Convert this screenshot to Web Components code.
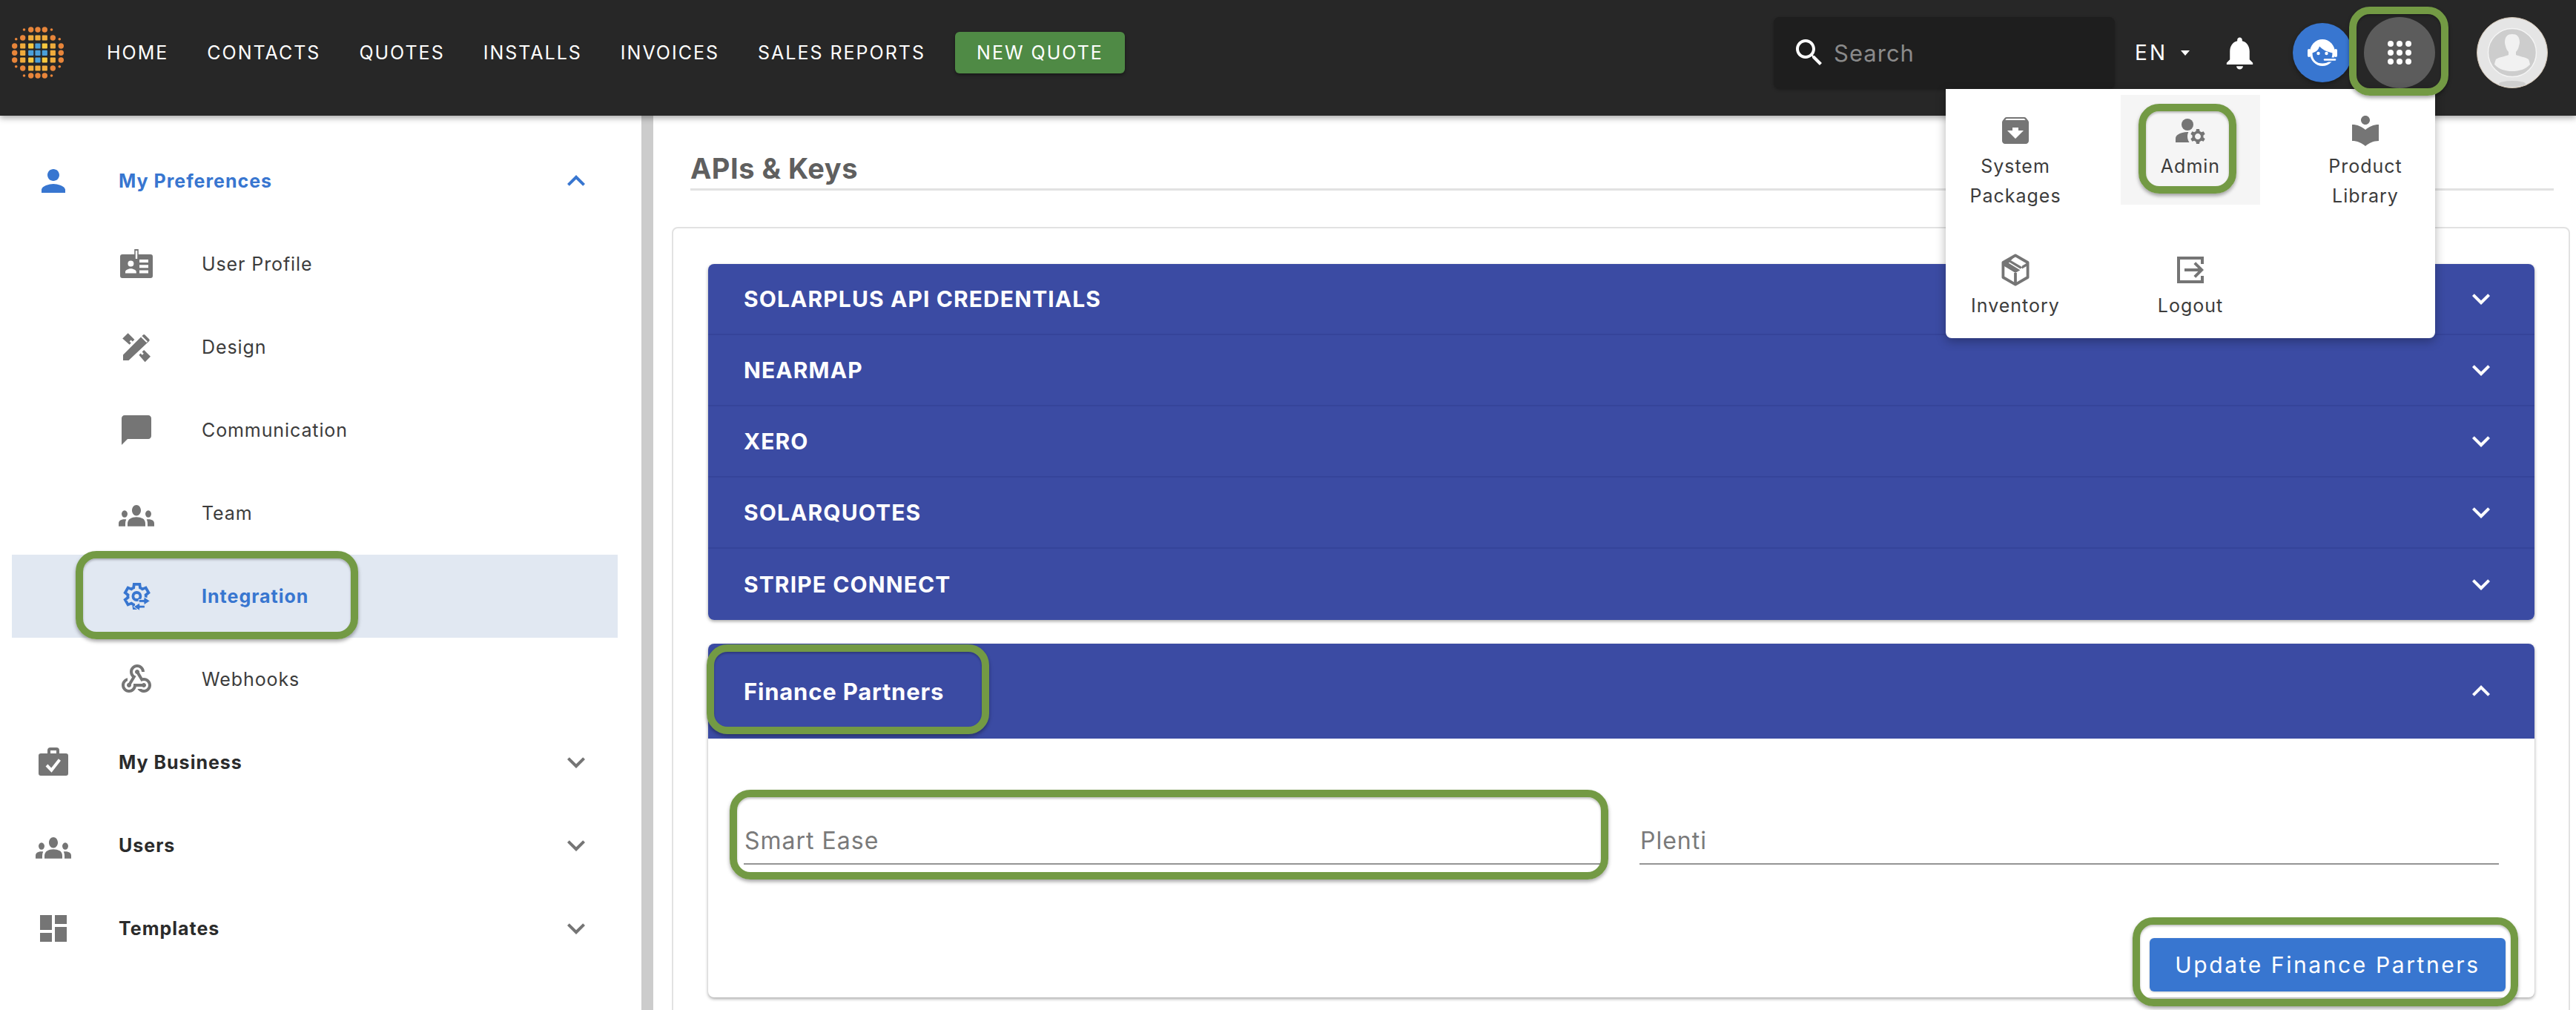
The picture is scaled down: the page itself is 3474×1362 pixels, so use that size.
<!DOCTYPE html>
<html lang="en">
<head>
<meta charset="utf-8">
<title>APIs & Keys</title>
<style>
  html, body { margin: 0; padding: 0; background: #fff; }
  body { position: relative; width: 3474px; height: 1362px; overflow: hidden; font-family: Inter, "Open Sans", sans-serif; }
</style>
</head>
<body>
<app-header>
  <nav-link>HOME</nav-link>
  <nav-link>CONTACTS</nav-link>
  <nav-link>QUOTES</nav-link>
  <nav-link>INSTALLS</nav-link>
  <nav-link>INVOICES</nav-link>
  <nav-link>SALES REPORTS</nav-link>
  <new-quote>NEW QUOTE</new-quote>
  <apps-menu slot="menu">
    <menu-tile icon="archive">System Packages</menu-tile>
    <menu-tile icon="admin" active>Admin</menu-tile>
    <menu-tile icon="library">Product Library</menu-tile>
    <menu-tile icon="box">Inventory</menu-tile>
    <menu-tile icon="logout">Logout</menu-tile>
  </apps-menu>
</app-header>

<page-body>
  <side-nav slot="side">
    <nav-row level="1" icon="person" chevron="up" state="open">My Preferences</nav-row>
    <nav-row level="2" icon="badge">User Profile</nav-row>
    <nav-row level="2" icon="design">Design</nav-row>
    <nav-row level="2" icon="chat">Communication</nav-row>
    <nav-row level="2" icon="groups">Team</nav-row>
    <nav-row level="2" icon="integration" state="current">Integration</nav-row>
    <nav-row level="2" icon="webhook">Webhooks</nav-row>
    <nav-row level="1" icon="business" chevron="down">My Business</nav-row>
    <nav-row level="1" icon="groups" chevron="down">Users</nav-row>
    <nav-row level="1" icon="templates" chevron="down">Templates</nav-row>
  </side-nav>
  <api-page title="APIs &amp; Keys">
    <acc-group>
      <acc-row>SOLARPLUS API CREDENTIALS</acc-row>
      <acc-row>NEARMAP</acc-row>
      <acc-row>XERO</acc-row>
      <acc-row>SOLARQUOTES</acc-row>
      <acc-row>STRIPE CONNECT</acc-row>
    </acc-group>
    <finance-panel heading="Finance Partners">
      <text-field>Smart Ease</text-field>
      <text-field>Plenti</text-field>
      <span slot="action">Update Finance Partners</span>
    </finance-panel>
  </api-page>
</page-body>

<ring-mark x="3168" y="9" w="134" h="120"></ring-mark>
<ring-mark x="2884" y="140" w="132" h="121"></ring-mark>
<ring-mark x="102" y="743" w="381" h="119"></ring-mark>
<ring-mark x="953" y="869" w="381" h="121"></ring-mark>
<ring-mark x="984" y="1065" w="1185" h="121"></ring-mark>
<ring-mark x="2876" y="1237" w="520" h="120"></ring-mark>

<script>
/**** ICONS */
const ICONS = {
  person: '<path d="M12 12c2.21 0 4-1.79 4-4s-1.79-4-4-4-4 1.79-4 4 1.79 4 4 4zm0 2c-2.67 0-8 1.34-8 4v2h16v-2c0-2.66-5.33-4-8-4z"/>',
  badge: '<path fill-rule="evenodd" d="M2.500 5.500h19a1.500 1.500 0 0 1 1.500 1.500v13a1.500 1.500 0 0 1-1.500 1.500h-19A1.500 1.500 0 0 1 1 20V7a1.500 1.500 0 0 1 1.500-1.500zM14 9v2h6V9zm0 3.600v2h6v-2zm0 3.600v2h6v-2zM8.200 9.800a2 2 0 1 0 0 4 2 2 0 0 0 0-4zM4.500 18.200h7.400v-.9c0-1.300-2.400-2.200-3.700-2.200s-3.700.9-3.700 2.200z"/><rect x="10.600" y="2" width="2.800" height="7" fill="#757575"/><rect x="11.400" y="3" width="1.200" height="5.500" fill="#fff"/>',
  design: '<path d="M3 21v-3.750L16.400 3.850c.4-.4 1-.4 1.400 0l2.750 2.750c.4.4.4 1 0 1.400L6.750 21z"/><path fill="#fff" d="M15 5.200l.7-.7 3.800 3.800-.7.7z"/><path d="M2.600 6.300L6.300 2.600l4.400 4.400-1.300 1.300-1.100-1.100-1 1 1.100 1.100-1.100 1.100zM13.700 17.400l1.100-1.100 1.100 1.100 1-1-1.100-1.100 1.300-1.300 4.400 4.400-3.700 3.700z"/>',
  chat: '<path d="M20 2H4c-1.100 0-2 .9-2 2v18l4-4h14c1.100 0 2-.9 2-2V4c0-1.100-.9-2-2-2z"/>',
  groups: '<g transform="translate(0 -.7) scale(1 1.200)"><path d="M12 12.750c1.630 0 3.070.39 4.240.9 1.080.48 1.760 1.560 1.760 2.730V18H6v-1.610c0-1.180.68-2.260 1.760-2.730 1.170-.52 2.610-.91 4.240-.91zM4 13c1.100 0 2-.9 2-2s-.9-2-2-2-2 .9-2 2 .9 2 2 2zm1.130 1.100C4.760 14.040 4.390 14 4 14c-.99 0-1.930.21-2.780.58C.48 14.900 0 15.620 0 16.430V18h4.500v-1.610c0-.83.23-1.610.63-2.290zM20 13c1.100 0 2-.9 2-2s-.9-2-2-2-2 .9-2 2 .9 2 2 2zm4 3.430c0-.81-.48-1.530-1.220-1.850C21.930 14.210 20.990 14 20 14c-.39 0-.76.04-1.130.1.4.68.63 1.460.63 2.290V18H24v-1.570zM12 6c1.660 0 3 1.340 3 3s-1.340 3-3 3-3-1.340-3-3 1.340-3 3-3z"/></g>',
  integration: '<path fill="none" stroke="currentColor" stroke-width="1.900" d="M18.300 12.900c.05-.3.080-.6.080-.9s-.03-.6-.08-.9l1.900-1.500-1.900-3.300-2.250.9c-.47-.36-1-.66-1.540-.89L14.200 3.900h-3.800l-.32 2.410c-.55.23-1.080.53-1.540.89l-2.250-.9-1.900 3.300 1.900 1.500c-.05.3-.08.6-.08.9s.03.6.08.9l-1.900 1.500 1.900 3.300 2.250-.9c.47.36 1 .66 1.540.89l.32 2.410h2"/><circle cx="12.200" cy="12" r="2.500" fill="none" stroke="currentColor" stroke-width="1.900"/><path d="M17 12.400l4.200 2.800-4.200 2.800v-1.800h-3.400v-2h3.400zM14.300 16.400v1.700h3.400v1.900h-3.400v1.800l-4.200-2.700z" stroke="#e1e8f2" stroke-width=".5"/>',
  webhook: '<path d="M10 15h5.880c.27-.31.67-.5 1.120-.5.83 0 1.500.67 1.500 1.500s-.67 1.500-1.500 1.500c-.44 0-.84-.19-1.120-.5H11.900c-.46 2.280-2.480 4-4.900 4-2.760 0-5-2.240-5-5 0-2.420 1.720-4.440 4-4.900v2.070c-1.160.41-2 1.530-2 2.830 0 1.650 1.350 3 3 3s3-1.350 3-3v-1zm2.500-11c1.650 0 3 1.350 3 3h2c0-2.760-2.240-5-5-5s-5 2.240-5 5c0 1.430.6 2.710 1.550 3.620l-2.350 3.900c-.68.14-1.200.75-1.200 1.480 0 .83.67 1.500 1.500 1.500s1.500-.67 1.500-1.500c0-.16-.02-.31-.07-.45l3.380-5.630C10.490 9.610 9.500 8.420 9.500 7c0-1.650 1.350-3 3-3zm4.500 9c-.64 0-1.230.2-1.720.54l-3.050-5.070C11.530 8.350 11 7.740 11 7c0-.83.67-1.500 1.500-1.500S14 6.170 14 7c0 .15-.02.29-.06.43l2.190 3.650c.28-.05.57-.08.87-.08 2.760 0 5 2.240 5 5s-2.240 5-5 5c-1.850 0-3.470-1.010-4.330-2.500h2.670c.48.32 1.050.5 1.660.5 1.650 0 3-1.350 3-3s-1.350-3-3-3z"/>',
  business: '<path fill-rule="evenodd" d="M8 6V4a2 2 0 0 1 2-2h4a2 2 0 0 1 2 2v2h4.500A1.500 1.500 0 0 1 22 7.500v12a1.500 1.500 0 0 1-1.500 1.500h-17A1.500 1.500 0 0 1 2 19.500v-12A1.500 1.500 0 0 1 3.500 6zM10 4v2h4V4z"/><path d="M7.500 14l3.200 3.300 5.500-7" fill="none" stroke="#fff" stroke-width="2"/>',
  templates: '<path d="M3 13h8V3H3v10zm0 8h8v-6H3v6zm10 0h8V11h-8v10zm0-18v6h8V3h-8z"/>',
  up: '<path d="M12 8l-6 6 1.410 1.410L12 10.830l4.590 4.580L18 14z"/>',
  down: '<path d="M16.590 8.590L12 13.170 7.410 8.590 6 10l6 6 6-6z"/>',
  archive: '<path fill-rule="evenodd" d="M20.540 5.230l-1.390-1.680C18.880 3.210 18.470 3 18 3H6c-.47 0-.88.21-1.160.55L3.460 5.230C3.170 5.570 3 6.020 3 6.500V19c0 1.100.9 2 2 2h14c1.100 0 2-.9 2-2V6.500c0-.48-.17-.93-.46-1.270zM12 17.500L6.500 12H10v-2h4v2h3.500L12 17.500zM5.120 5l.81-1h12l.94 1H5.120z"/>',
  admin: '<circle cx="10" cy="8" r="4"/><path d="M10.670 13.020C10.450 13.010 10.230 13 10 13c-2.420 0-4.680.67-6.610 1.820-.88.52-1.390 1.500-1.390 2.530V20h9.260c-.79-1.130-1.260-2.510-1.260-4 0-1.070.25-2.070.67-2.980z"/><path fill-rule="evenodd" d="M20.750 16c0-.22-.03-.42-.06-.63l1.140-1.010-1-1.730-1.450.49c-.32-.27-.68-.48-1.080-.63L18 11h-2l-.3 1.490c-.4.15-.76.36-1.080.63l-1.450-.49-1 1.730 1.140 1.010c-.03.21-.06.41-.06.63s.03.42.06.63l-1.140 1.010 1 1.730 1.450-.49c.32.27.68.48 1.080.63L16 21h2l.3-1.490c.4-.15.76-.36 1.080-.63l1.450.49 1-1.730-1.140-1.010c.03-.21.06-.41.06-.63zM17 18c-1.100 0-2-.9-2-2s.9-2 2-2 2 .9 2 2-.9 2-2 2z"/>',
  library: '<path d="M12 11.550C9.640 9.350 6.480 8 3 8v11c3.480 0 6.640 1.350 9 3.550 2.360-2.190 5.520-3.550 9-3.550V8c-3.480 0-6.640 1.350-9 3.550zM12 8c1.660 0 3-1.340 3-3s-1.340-3-3-3-3 1.340-3 3 1.340 3 3 3z"/>',
  box: '<path fill="none" stroke="currentColor" stroke-width="1.900" stroke-linejoin="round" d="M12 2.200l8.300 4.800v10L12 21.800 3.700 17V7z"/><path d="M12 2.200L3.700 7v2l8.300 5 3.200-1.900L7.400 7.400zM16.500 11.300l3.800-2.300V7l-3.800 2.300z"/><path d="M9 5.600l7.900 4.600-1.600 1L7.400 6.500z"/><path fill="none" stroke="currentColor" stroke-width="1.900" d="M12 14v7.800"/>',
  logout: '<path fill="none" stroke="currentColor" stroke-width="2" d="M20 8V4H4v16h16v-4"/><path d="M8 11h9.200l-3-3 1.400-1.400 5.400 5.400-5.400 5.400-1.400-1.400 3-3H8z"/>',
  search: '<path d="M15.500 14h-.79l-.28-.27C15.410 12.590 16 11.110 16 9.500 16 5.910 13.090 3 9.500 3S3 5.910 3 9.500 5.910 16 9.500 16c1.610 0 3.090-.59 4.230-1.570l.27.28v.79l5 4.990L20.490 19l-4.990-5zm-6 0C7.010 14 5 11.990 5 9.500S7.010 5 9.500 5 14 7.010 14 9.500 11.990 14 9.500 14z"/>',
  bell: '<path d="M12 22c1.100 0 2-.9 2-2h-4c0 1.100.9 2 2 2zm6-6v-5c0-3.070-1.640-5.640-4.500-6.320V4c0-.83-.67-1.500-1.500-1.500s-1.500.67-1.500 1.500v.68C7.630 5.360 6 7.920 6 11v5l-2 2v1h16v-1l-2-2z"/>'
}

function iconSvg(name, size) {
  return `<svg width="${size}" height="${size}" viewBox="0 0 24 24" fill="currentColor" aria-hidden="true">${ICONS[name]}</svg>`
}

/**** LOGO */
function logoSvg() {
  const orange = '#e8853a', gold = '#f0ac3c', yellow = '#f7c83e', blue = '#4a9fd9'
  const ys = [40, 51, 62, 71.3, 81, 92, 102]
  const dot = (x, y, r) => `<circle cx="${x}" cy="${y}" r="${r}" fill="${orange}"/>`
  const sq = (x, y, c) => `<rect x="${x - 3.6}" y="${y - 3.6}" width="7.2" height="7.2" rx="1" fill="${c}"/>`
  let out = ''
  ;[0, 6].forEach(r => {
    out += dot(32.5, ys[r], 1.8) + dot(69.5, ys[r], 1.8)
    ;[41.7, 51, 60.3].forEach(x => { out += dot(x, ys[r], 3.7) })
  })
  ;[1, 5].forEach(r => {
    const small = r === 1 ? 52.7 : 89.7
    out += dot(21.7, small, 1.8) + dot(80.3, small, 1.8)
    out += dot(30.7, ys[r], 3.7) + dot(71.3, ys[r], 3.7)
    ;[41.7, 51, 60.3].forEach(x => { out += sq(x, ys[r], gold) })
  })
  ;[2, 3, 4].forEach(r => {
    out += dot(19.7, ys[r], 3.7) + dot(82.3, ys[r], 3.7)
    out += sq(30.7, ys[r], gold) + sq(71.3, ys[r], gold)
    const mid = r === 3 ? [blue, blue, blue] : [yellow, blue, yellow]
    ;[41.7, 51, 60.3].forEach((x, i) => { out += sq(x, ys[r], mid[i]) })
  })
  return `<svg width="102" height="142" viewBox="0 0 102 142">${out}</svg>`
}

class UiBase extends HTMLElement {
  constructor() {
    super()
    this.attachShadow({ mode: 'open' })
  }
  connectedCallback() {
    this.shadowRoot.innerHTML = this.render()
  }
}

/**** HEADER */
class AppHeader extends UiBase {
  render() {
    return `
    <style>
      :host { display: flex; position: relative; z-index: 10; box-sizing: border-box; height: 156px; padding: 0 38px 14px 0; align-items: center; background: #272727; color: #fff; box-shadow: 0 3px 8px rgba(0,0,0,.35); }
      .logo { display: flex; width: 144px; flex: none; }
      nav { display: flex; align-items: center; }
      .right { display: flex; align-items: center; margin-left: auto; }
      .search { display: flex; align-items: center; width: 460px; height: 96px; box-sizing: border-box; padding-left: 24px; background: #1e1e1e; border-radius: 8px; box-shadow: 0 2px 4px rgba(0,0,0,.3); color: #fff; }
      .search span { margin-left: 9px; font-size: 31px; color: #8a8a8a; letter-spacing: 1px; }
      .search svg { display: block; }
      .lang { display: flex; align-items: center; margin-left: 27px; font-size: 28px; letter-spacing: 3px; }
      .lang i { width: 0; height: 0; margin-left: 18px; border: 6.5px solid transparent; border-top: 7px solid #fff; border-bottom: 0; }
      .bell { display: flex; margin-left: 41px; }
      .support { display: flex; align-items: center; justify-content: center; margin-left: 45px; width: 80px; height: 80px; border-radius: 50%; background: #3876d0; box-shadow: 0 3px 6px rgba(0,0,0,.3); }
      .apps { display: grid; grid-template-columns: repeat(3, 8px); gap: 4px; justify-content: center; align-content: center; margin-left: 16px; width: 96px; height: 96px; border-radius: 50%; background: #5c5c5c; }
      .apps b { width: 8px; height: 8px; border-radius: 50%; background: #fff; }
      .avatar { display: flex; margin-left: 56px; }
    </style>
    <div class="logo">${logoSvg()}</div>
    <nav><slot></slot></nav>
    <div class="right">
      <div class="search">${iconSvg('search', 48)}<span>Search</span></div>
      <div class="lang">EN<i></i></div>
      <div class="bell">${iconSvg('bell', 53)}</div>
      <div class="support">
        <svg width="40" height="36" viewBox="0 0 40 36">
          <ellipse cx="20" cy="18" rx="17" ry="18" fill="#fff"/>
          <path d="M6.500 18.500C11.500 17 15 14 16 9.500 20 14 26 17 33.500 18.500 33.500 28 28 32.500 20 32.500S6.500 28 6.500 18.500z" fill="#3876d0"/>
          <rect x="0" y="13" width="4" height="11" rx="2" fill="#fff"/>
          <rect x="36" y="13" width="4" height="11" rx="2" fill="#fff"/>
          <circle cx="14.500" cy="19" r="2.200" fill="#fff"/>
          <circle cx="25.500" cy="19" r="2.200" fill="#fff"/>
          <path d="M23 27.500h14" stroke="#3876d0" stroke-width="6"/>
          <path d="M23 27.500h14" stroke="#fff" stroke-width="2.600" stroke-linecap="round"/>
        </svg>
      </div>
      <div class="apps"><b></b><b></b><b></b><b></b><b></b><b></b><b></b><b></b><b></b></div>
      <div class="avatar">
        <svg width="96" height="96" viewBox="0 0 96 96">
          <circle cx="48" cy="48" r="47.5" fill="#e5e5e5" stroke="#cdbfae" stroke-width="1"/>
          <ellipse cx="48" cy="90" rx="18" ry="4" fill="#cfcfcf"/>
          <circle cx="48" cy="48" r="32.500" fill="#cdcdcd" stroke="#f4f4f4" stroke-width="1.5"/>
          <path d="M38 34c0-8 4-11 10-11s10 3 10 11c0 2-.5 3-1 5-.5 3-2 6-4 8v4c4 2 13 3 17 6 1 2 1.500 5 2 7-6.500 6.500-14 9-24 9s-17.500-2.500-24-9c.5-2 1-5 2-7 4-3 13-4 17-6v-4c-2-2-3.500-5-4-8-.5-2-1-3-1-5z" fill="#f1f1f1"/>
        </svg>
      </div>
    </div>
    <slot name="menu"></slot>`
  }
}
customElements.define('app-header', AppHeader)

class NavLink extends UiBase {
  render() {
    return `
    <style>
      :host { display: block; margin-right: 52px; font-size: 25px; letter-spacing: 2px; white-space: nowrap; color: #fff; }
    </style>
    <slot></slot>`
  }
}
customElements.define('nav-link', NavLink)

class NewQuote extends UiBase {
  render() {
    return `
    <style>
      :host { display: flex; align-items: center; justify-content: center; width: 229px; height: 56px; margin-left: -12px; border-radius: 6px; background: #4f8a45; box-shadow: 0 2px 4px rgba(0,0,0,.4); font-size: 25px; letter-spacing: 2px; white-space: nowrap; color: #fff; }
    </style>
    <slot></slot>`
  }
}
customElements.define('new-quote', NewQuote)

/**** MENU */
class AppsMenu extends UiBase {
  render() {
    return `
    <style>
      :host { position: absolute; left: 2624px; top: 120px; width: 660px; height: 336px; box-sizing: border-box; padding-top: 8px; display: grid; grid-template-columns: repeat(3, 188px); grid-template-rows: 148px 132px; column-gap: 48px; row-gap: 40px; background: #fff; border-radius: 0 0 8px 8px; box-shadow: 0 4px 14px rgba(0,0,0,.3); }
    </style>
    <slot></slot>`
  }
}
customElements.define('apps-menu', AppsMenu)

class MenuTile extends UiBase {
  render() {
    const bg = this.hasAttribute('active') ? '#f5f5f5' : 'transparent'
    return `
    <style>
      :host { display: flex; flex-direction: column; align-items: center; box-sizing: border-box; padding-top: 24px; background: ${bg}; color: #757575; text-align: center; }
      svg { display: block; flex: none; }
      div { flex: none; margin-top: 4px; padding: 0 20px; font-size: 25px; line-height: 40px; letter-spacing: 1px; color: #3c3c3c; }
    </style>
    ${iconSvg(this.getAttribute('icon'), 48)}
    <div><slot></slot></div>`
  }
}
customElements.define('menu-tile', MenuTile)

/**** PAGE */
class PageBody extends UiBase {
  render() {
    return `
    <style>
      :host { display: flex; height: 1206px; overflow: hidden; }
      .bar { flex: none; width: 16px; background: #cccccc; }
    </style>
    <slot name="side"></slot>
    <div class="bar"></div>
    <slot></slot>`
  }
}
customElements.define('page-body', PageBody)

class SideNav extends UiBase {
  render() {
    return `
    <style>
      :host { display: block; flex: none; width: 865px; box-sizing: border-box; padding: 32px 32px 0 16px; background: #fff; }
    </style>
    <slot></slot>`
  }
}
customElements.define('side-nav', SideNav)

class NavRow extends UiBase {
  render() {
    const level = this.getAttribute('level')
    const state = this.getAttribute('state')
    const chevron = this.getAttribute('chevron')
    const blue = state === 'open' || state === 'current'
    const bold = level === '1' || state === 'current'
    return `
    <style>
      :host { display: flex; align-items: center; height: 112px; padding-left: ${level === '1' ? 32 : 144}px; padding-right: 32px; background: ${state === 'current' ? '#e1e8f2' : 'transparent'}; color: ${blue ? '#3876d0' : '#757575'}; }
      svg { display: block; flex: none; }
      .t { margin-left: 64px; flex: 1; font-size: 25px; letter-spacing: ${bold ? 1 : .9}px; font-weight: ${bold ? 700 : 400}; color: ${blue ? '#3876d0' : (bold ? '#2b2b2b' : '#3c3c3c')}; }
    </style>
    ${iconSvg(this.getAttribute('icon'), 48)}
    <div class="t"><slot></slot></div>
    ${chevron ? iconSvg(chevron, 48) : ''}`
  }
}
customElements.define('nav-row', NavRow)

class ApiPage extends UiBase {
  render() {
    return `
    <style>
      :host { display: block; flex: 1; min-width: 0; padding-left: 25px; }
      h1 { display: flex; align-items: center; height: 54px; margin: 0 30px 0 25px; padding: 44px 0 0; border-bottom: 3px solid #e2e2e2; font-size: 38px; font-weight: 700; color: #5f5f5f; letter-spacing: .5px; }
      .card { display: flex; flex-direction: column; gap: 32px; box-sizing: border-box; width: 2560px; height: 1200px; margin-top: 49px; padding: 48px 46px 0 47px; border: 2px solid #e2e2e2; border-radius: 8px; background: #fff; }
    </style>
    <h1>${this.getAttribute('title').replace('&', '&amp;')}</h1>
    <div class="card"><slot></slot></div>`
  }
}
customElements.define('api-page', ApiPage)

class AccGroup extends UiBase {
  render() {
    return `
    <style>
      :host { display: block; border-radius: 8px; overflow: hidden; box-shadow: 0 2px 4px rgba(0,0,0,.35); }
    </style>
    <slot></slot>`
  }
}
customElements.define('acc-group', AccGroup)

class AccRow extends UiBase {
  render() {
    return `
    <style>
      :host { display: flex; align-items: center; justify-content: space-between; box-sizing: border-box; height: 96px; padding: 0 48px; background: #3b4ba3; border-bottom: 2px solid #35449a; color: #fff; }
      :host(:last-child) { border-bottom: 0; }
      div { font-size: 30px; font-weight: 700; letter-spacing: 1.1px; }
      svg { display: block; }
    </style>
    <div><slot></slot></div>
    ${iconSvg('down', 48)}`
  }
}
customElements.define('acc-row', AccRow)

class FinancePanel extends UiBase {
  render() {
    return `
    <style>
      :host { display: block; border-radius: 8px; background: #fff; box-shadow: 0 2px 4px rgba(0,0,0,.35); }
      header { display: flex; align-items: center; justify-content: space-between; height: 128px; padding: 0 48px; border-radius: 8px 8px 0 0; background: #3b4ba3; color: #fff; font-size: 31px; font-weight: 700; letter-spacing: .8px; }
      svg { display: block; }
      .fields { display: grid; grid-template-columns: 1159px 1159px; column-gap: 49px; padding: 110px 0 0 48px; }
      .foot { display: flex; justify-content: flex-end; padding: 99px 39px 8px 0; }
      button { width: 480px; height: 72px; border: 0; border-radius: 6px; background: #3876d0; color: #fff; font: 400 30px Inter, sans-serif; letter-spacing: 2.6px; box-shadow: 0 1px 3px rgba(0,0,0,.2); }
    </style>
    <header><span>${this.getAttribute('heading')}</span>${iconSvg('up', 48)}</header>
    <div class="fields"><slot></slot></div>
    <div class="foot"><button><slot name="action"></slot></button></div>`
  }
}
customElements.define('finance-panel', FinancePanel)

class TextField extends UiBase {
  render() {
    return `
    <style>
      :host { display: flex; align-items: center; box-sizing: border-box; height: 60px; padding: 0 0 4px 1px; border-bottom: 2px solid #949494; font-size: 32px; letter-spacing: 1px; color: #7a7a7a; }
    </style>
    <slot></slot>`
  }
}
customElements.define('text-field', TextField)

/**** GREEN MARKS DRAWN OVER THE SCREENSHOT */
class RingMark extends UiBase {
  render() {
    const a = n => this.getAttribute(n)
    return `
    <style>
      :host { position: absolute; left: ${a('x')}px; top: ${a('y')}px; width: ${a('w')}px; height: ${a('h')}px; box-sizing: border-box; z-index: 20; border: 10px solid #739a44; border-radius: 28px; box-shadow: 0 3px 5px rgba(0,0,0,.35), inset 0 2px 3px rgba(0,0,0,.25); pointer-events: none; }
    </style>`
  }
}
customElements.define('ring-mark', RingMark)
</script>
</body>
</html>
